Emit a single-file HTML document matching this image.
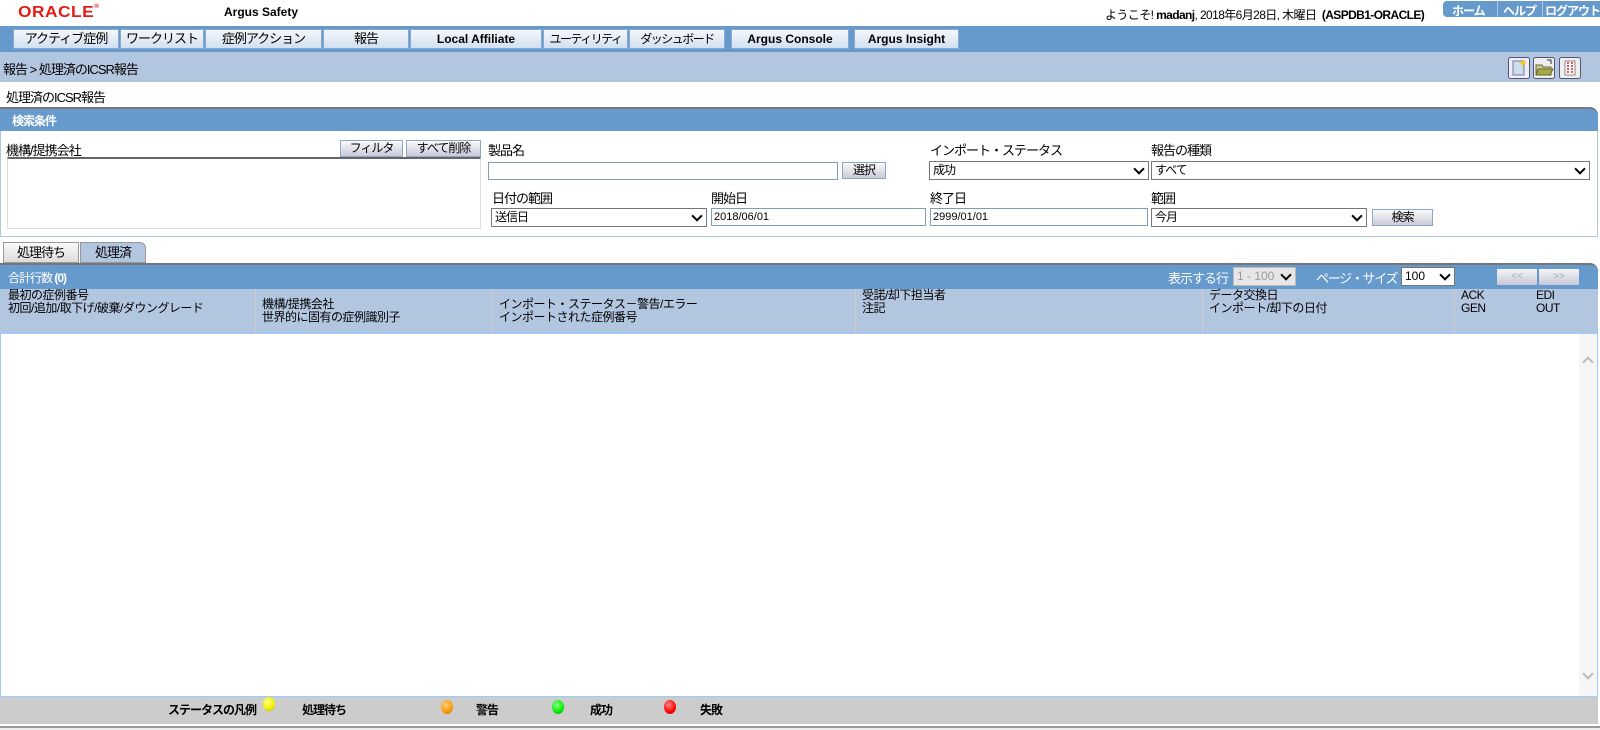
<!DOCTYPE html>
<html><head><meta charset="utf-8">
<style>
*{box-sizing:border-box;margin:0;padding:0}
body{width:1600px;height:730px;position:relative;background:#fff;font-family:"Liberation Sans","Noto Sans CJK JP",sans-serif;font-size:12px;color:#000;overflow:hidden}
.a{position:absolute;white-space:nowrap}
.j{letter-spacing:-1px}
.nb{position:absolute;top:29px;height:20px;background:linear-gradient(#f4f7fc,#d3e0f0);border:1px solid #8aa9cf;text-align:center;font-size:13px;line-height:18px;letter-spacing:-1px;overflow:hidden}
.nb.b{font-weight:bold;font-size:12px;letter-spacing:0}
.btn{position:absolute;height:17px;background:linear-gradient(#fafafa,#c9cbd8);border:1px solid #8ea6c8;text-align:center;font-size:12px;line-height:15px;letter-spacing:-1px;overflow:hidden}
.inp{position:absolute;height:18px;border:1px solid #7f9db9;background:#fff;font-size:11px;line-height:16px;padding-left:2px}
.sel{position:absolute;height:19px;border:1px solid #777;background:#fff;font-size:12px;line-height:17px;padding-left:3px}
.sel:after{content:"";position:absolute;right:5px;top:3px;width:6px;height:6px;border-right:2px solid #000;border-bottom:2px solid #000;transform:rotate(45deg)}
.dot{position:absolute;width:12px;height:14px;border-radius:50%}
.lg{position:absolute;top:701px;font-weight:bold;font-size:12px;letter-spacing:-1px}
.ch{position:absolute;top:289px;height:45px;font-size:12px;line-height:13px;padding-left:6px;letter-spacing:-0.5px}
</style></head><body>
<div class="a" style="left:18px;top:4px;color:#e41b17;font-weight:bold;font-size:16px;letter-spacing:0.5px;transform:scaleX(1.08);transform-origin:left">ORACLE<span style="font-size:6px;vertical-align:top">®</span></div>
<div class="a" style="left:224px;top:5px;font-weight:bold;font-size:12px">Argus Safety</div>
<div class="a" style="left:1105px;top:6px;font-size:12px;letter-spacing:-0.6px">ようこそ! <b>madanj</b>, 2018年6月28日, 木曜日 &nbsp;<b>(ASPDB1-ORACLE)</b></div>
<div class="a" style="left:1443px;top:1px;width:157px;height:16px;background:#6699cc;border-radius:4px 0 0 4px"></div>
<div class="a j" style="left:1452px;top:2px;color:#fff;font-weight:bold;font-size:12px">ホーム</div>
<div class="a" style="left:1497px;top:1px;width:1px;height:16px;background:#b3c6e0"></div>
<div class="a j" style="left:1503px;top:2px;color:#fff;font-weight:bold;font-size:12px">ヘルプ</div>
<div class="a" style="left:1542px;top:1px;width:1px;height:16px;background:#b3c6e0"></div>
<div class="a j" style="left:1545px;top:2px;color:#fff;font-weight:bold;font-size:12px">ログアウト</div>

<div class="a" style="left:0;top:26px;width:1600px;height:26px;background:#6699cc"></div>
<div class="nb" style="left:13px;width:106px">アクティブ症例</div>
<div class="nb" style="left:120px;width:84px">ワークリスト</div>
<div class="nb" style="left:205px;width:117px">症例アクション</div>
<div class="nb" style="left:323px;width:86px">報告</div>
<div class="nb b" style="left:410px;width:132px">Local Affiliate</div>
<div class="nb" style="left:543px;width:85px;font-size:12px;letter-spacing:-1.5px">ユーティリティ</div>
<div class="nb" style="left:629px;width:96px;font-size:12px;letter-spacing:-1.5px">ダッシュボード</div>
<div class="nb b" style="left:731px;width:118px">Argus Console</div>
<div class="nb b" style="left:854px;width:105px">Argus Insight</div>

<div class="a" style="left:0;top:52px;width:1600px;height:30px;background:#b3c6e0"></div>
<div class="a j" style="left:3px;top:59px;font-size:13px">報告 &gt; 処理済のICSR報告</div>
<svg class="a" style="left:1508px;top:57px" width="22" height="22"><rect x=".5" y=".5" width="21" height="21" rx="2" fill="#eef" stroke="#557"/><rect x="5" y="4" width="11" height="14" fill="#cde" stroke="#779"/><path d="M15 2l1 3 3 1-3 1-1 3-1-3-3-1 3-1z" fill="#fc0"/></svg>
<svg class="a" style="left:1533px;top:57px" width="22" height="22"><rect x=".5" y=".5" width="21" height="21" rx="2" fill="#eee" stroke="#557"/><path d="M3 8h6l1 2h8v8H3z" fill="#cc9" stroke="#663"/><path d="M5 12h15l-3 6H3z" fill="#aa4" stroke="#663"/><path d="M14 3h4v4" fill="none" stroke="#333"/></svg>
<svg class="a" style="left:1559px;top:57px" width="22" height="22"><rect x=".5" y=".5" width="21" height="21" rx="2" fill="#eee" stroke="#557"/><rect x="6" y="4" width="10" height="14" fill="#fff" stroke="#888"/><path d="M8 6h2M8 9h2M8 12h2M8 15h2M12 6h2M12 9h2M12 12h2M12 15h2" stroke="#d22" stroke-width="1.5"/></svg>

<div class="a j" style="left:6px;top:87px;font-size:13px">処理済のICSR報告</div>

<div class="a" style="left:0;top:107px;width:1598px;height:24px;background:#6699cc;border-top:2px solid #777;border-radius:0 8px 0 0"></div>
<div class="a j" style="left:12px;top:112px;color:#fff;font-weight:bold;font-size:12px">検索条件</div>
<div class="a" style="left:0;top:131px;width:1598px;height:106px;border:1px solid #b3c6e0;border-top:none"></div>
<div class="a j" style="left:6px;top:140px;font-size:13px">機構/提携会社</div>
<div class="btn" style="left:340px;top:140px;width:63px">フィルタ</div>
<div class="btn" style="left:406px;top:140px;width:75px">すべて削除</div>
<div class="a" style="left:7px;top:157px;width:474px;height:72px;border:1px solid #ddd;border-top:2px solid #666;background:#fff"></div>
<div class="a j" style="left:488px;top:140px;font-size:13px">製品名</div>
<div class="inp" style="left:488px;top:162px;width:350px"></div>
<div class="btn" style="left:842px;top:162px;width:44px">選択</div>
<div class="a j" style="left:930px;top:140px;font-size:13px">インポート・ステータス</div>
<div class="sel j" style="left:929px;top:161px;width:220px">成功</div>
<div class="a j" style="left:1151px;top:140px;font-size:13px">報告の種類</div>
<div class="sel j" style="left:1151px;top:161px;width:439px">すべて</div>
<div class="a j" style="left:492px;top:188px;font-size:13px">日付の範囲</div>
<div class="sel j" style="left:491px;top:208px;width:216px">送信日</div>
<div class="a j" style="left:711px;top:188px;font-size:13px">開始日</div>
<div class="inp" style="left:711px;top:208px;width:215px">2018/06/01</div>
<div class="a j" style="left:930px;top:188px;font-size:13px">終了日</div>
<div class="inp" style="left:930px;top:208px;width:218px">2999/01/01</div>
<div class="a j" style="left:1151px;top:188px;font-size:13px">範囲</div>
<div class="sel j" style="left:1151px;top:208px;width:216px">今月</div>
<div class="btn" style="left:1372px;top:209px;width:61px">検索</div>

<div class="a j" style="left:3px;top:242px;width:76px;height:21px;background:linear-gradient(#fafafa,#ddd);border:1px solid #999;text-align:center;font-size:13px;line-height:19px">処理待ち</div>
<div class="a j" style="left:80px;top:242px;width:66px;height:21px;background:#b3c6e0;border:1px solid #999;border-radius:0 6px 0 0;text-align:center;font-size:13px;line-height:19px">処理済</div>

<div class="a" style="left:0;top:263px;width:1598px;height:26px;background:#6699cc;border-top:2px solid #777;border-radius:0 8px 0 0"></div>
<div class="a j" style="left:8px;top:269px;color:#fff;font-size:12px">合計行数 <b>(0)</b></div>
<div class="a j" style="left:1168px;top:268px;color:#fff;font-size:13px">表示する行</div>
<div class="sel" style="left:1233px;top:267px;width:63px;background:#e6e6e6;color:#999;border-color:#bbb">1 - 100</div>
<div class="a" style="left:1316px;top:268px;color:#fff;font-size:13px;letter-spacing:-1.3px">ページ・サイズ</div>
<div class="sel" style="left:1401px;top:267px;width:54px">100</div>
<div class="a" style="left:1497px;top:269px;width:40px;height:16px;background:linear-gradient(#f4f4f8,#c8c8d8);color:#aaa;text-align:center;font-size:10px;line-height:15px">&lt;&lt;</div>
<div class="a" style="left:1539px;top:269px;width:40px;height:16px;background:linear-gradient(#f4f4f8,#c8c8d8);color:#aaa;text-align:center;font-size:10px;line-height:15px">&gt;&gt;</div>

<div class="a" style="left:0;top:289px;width:1598px;height:45px;background:#b3c6e0;border-bottom:1px solid #9cf"></div>
<div class="ch" style="left:2px">最初の症例番号<br>初回/追加/取下げ/破棄/ダウングレード</div>
<div class="ch" style="left:255px;border-left:1px solid #ccc;padding-top:9px">機構/提携会社<br>世界的に固有の症例識別子</div>
<div class="ch" style="left:492px;border-left:1px solid #ccc;padding-top:9px">インポート・ステータス－警告/エラー<br>インポートされた症例番号</div>
<div class="ch" style="left:855px;border-left:1px solid #ccc">受諾/却下担当者<br>注記</div>
<div class="ch" style="left:1202px;border-left:1px solid #ccc">データ交換日<br>インポート/却下の日付</div>
<div class="ch" style="left:1454px;border-left:1px solid #ccc">ACK<br>GEN</div>
<div class="ch" style="left:1530px">EDI<br>OUT</div>

<div class="a" style="left:0;top:334px;width:1598px;height:362px;border:1px solid #9cf;border-top:none;border-bottom:none"></div>
<div class="a" style="left:1579px;top:334px;width:18px;height:362px;background:#f6f6f6"></div>
<div class="a" style="left:1584px;top:358px;width:8px;height:8px;border-left:2px solid #bbb;border-top:2px solid #bbb;transform:rotate(45deg)"></div>
<div class="a" style="left:1584px;top:670px;width:8px;height:8px;border-right:2px solid #bbb;border-bottom:2px solid #bbb;transform:rotate(45deg)"></div>

<div class="a" style="left:0;top:696px;width:1598px;height:28px;background:#ccc;border-top:1px solid #9cf"></div>
<div class="lg" style="left:168px">ステータスの凡例</div>
<div class="dot" style="left:263px;top:697px;background:radial-gradient(circle at 40% 35%,#ff8,#ee0 60%,#aa0)"></div>
<div class="lg" style="left:302px">処理待ち</div>
<div class="dot" style="left:441px;top:700px;background:radial-gradient(circle at 40% 35%,#fc8,#f90 60%,#b60)"></div>
<div class="lg" style="left:476px">警告</div>
<div class="dot" style="left:552px;top:700px;background:radial-gradient(circle at 40% 35%,#8f8,#0e0 60%,#090)"></div>
<div class="lg" style="left:590px">成功</div>
<div class="dot" style="left:664px;top:700px;background:radial-gradient(circle at 40% 35%,#f88,#f00 60%,#a00)"></div>
<div class="lg" style="left:700px">失敗</div>
<div class="a" style="left:0;top:726px;width:1600px;height:2px;background:#999"></div>
<div class="a" style="left:0;top:728px;width:1600px;height:2px;background:#eee"></div>
</body></html>
